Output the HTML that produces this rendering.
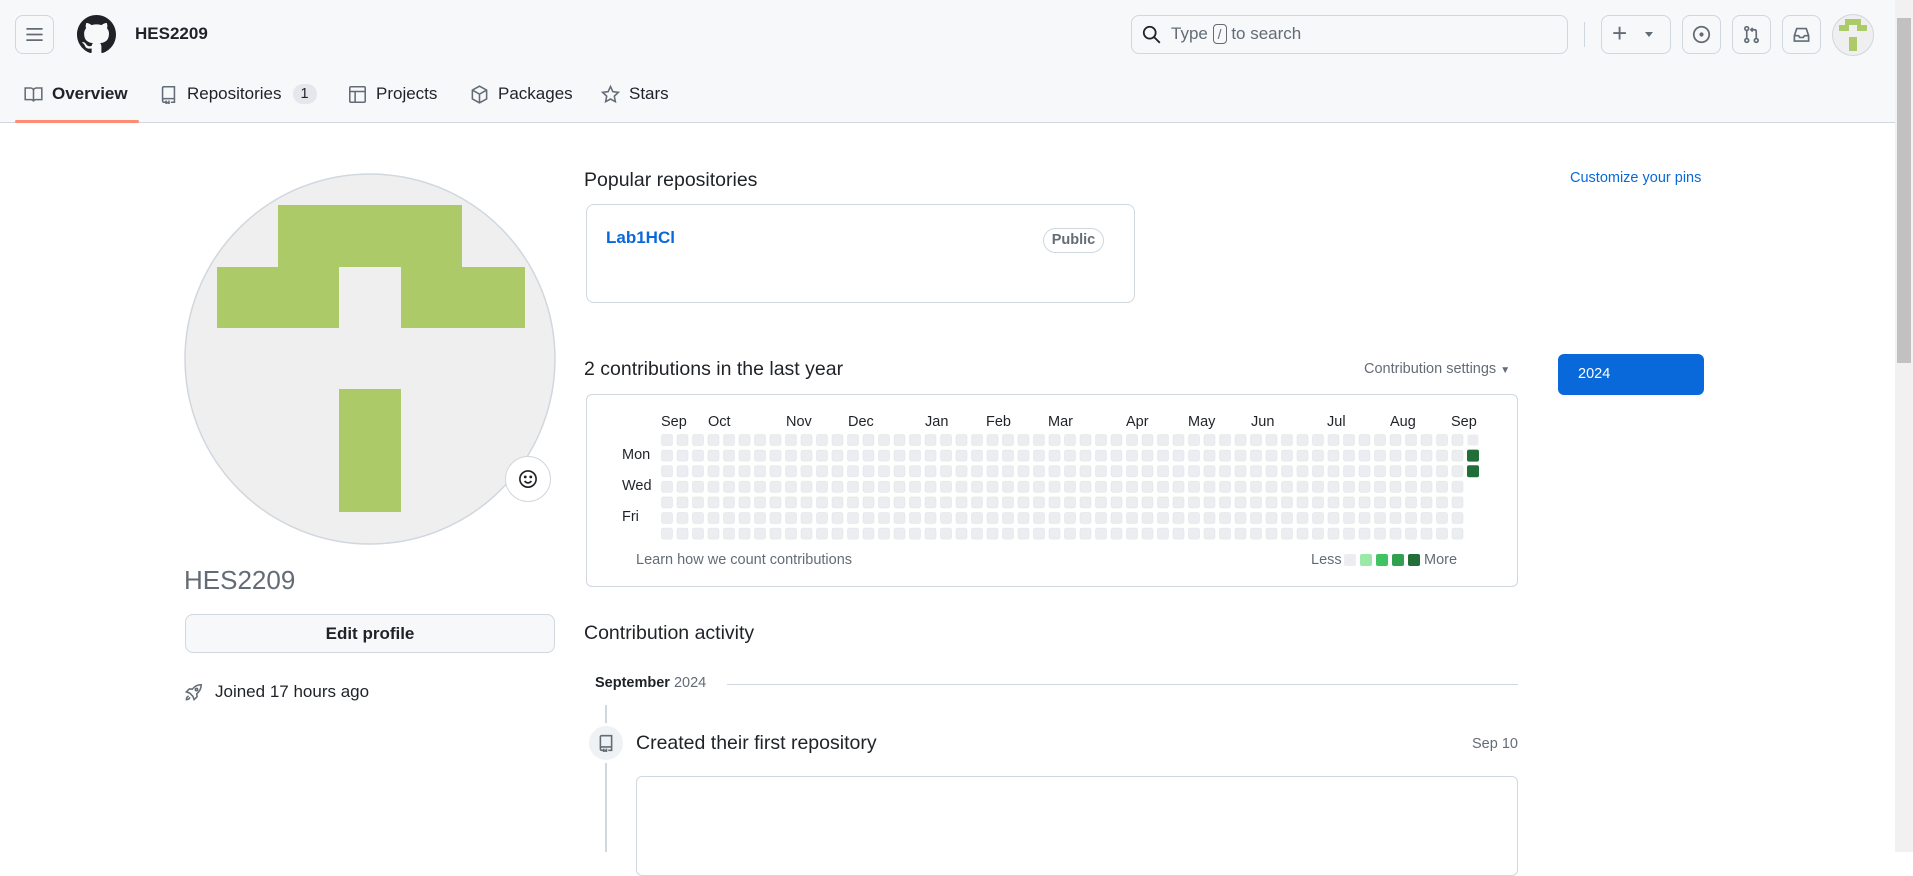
<!DOCTYPE html>
<html><head><meta charset="utf-8"><style>
*{box-sizing:border-box;margin:0;padding:0}
body{width:1913px;height:852px;overflow:hidden;background:#fff;font-family:"Liberation Sans",Arial,sans-serif;color:#1f2328;position:relative}
.a{position:absolute}
.hdr{left:0;top:0;width:1895px;height:123px;background:#f6f8fa;border-bottom:1px solid #d0d7de}
.btn{border:1px solid #d0d7de;border-radius:8px;background:#f6f8fa}
.tab{top:82px;font-size:17px;color:#1f2328;display:flex;align-items:center;gap:9px;height:24px}
.tab svg{width:19px;height:19px}
.sm{font-size:14.5px;color:#636c76}
</style></head><body>
<div class="a hdr"></div>
<div class="a btn" style="left:15px;top:15px;width:39px;height:39px"></div>
<svg class="a" style="left:25px;top:25px" width="19" height="19" viewBox="0 0 16 16" fill="#636c76"><rect x="1" y="2.5" width="14" height="1.5" rx=".75"/><rect x="1" y="7.25" width="14" height="1.5" rx=".75"/><rect x="1" y="12" width="14" height="1.5" rx=".75"/></svg>
<svg class="a" style="left:77px;top:15px" width="39" height="39" viewBox="0 0 16 16" fill="#1f2328"><path d="M8 0C3.58 0 0 3.58 0 8c0 3.540 2.29 6.53 5.47 7.59.4.07.55-.17.55-.38 0-.19-.01-.82-.01-1.49-2.010.37-2.530-.49-2.690-.94-.09-.23-.48-.94-.82-1.13-.28-.15-.68-.52-.01-.53.63-.01 1.08.58 1.23.82.72 1.21 1.87.87 2.33.66.07-.52.28-.87.51-1.07-1.78-.2-3.64-.89-3.64-3.95 0-.87.31-1.59.82-2.15-.08-.2-.36-1.02.08-2.12 0 0 .67-.21 2.2.82.64-.18 1.32-.27 2-.27.68 0 1.36.09 2 .27 1.53-1.04 2.2-.82 2.2-.82.44 1.1.16 1.92.08 2.12.51.56.82 1.27.82 2.15 0 3.07-1.87 3.75-3.65 3.95.29.25.54.73.54 1.48 0 1.07-.01 1.93-.01 2.2 0 .21.15.46.55.38A8.013 8.013 0 0016 8c0-4.42-3.58-8-8-8z"/></svg>
<div class="a" style="left:135px;top:24px;font-size:17px;font-weight:bold;line-height:20px">HES2209</div>

<div class="a btn" style="left:1131px;top:15px;width:437px;height:39px;background:#f6f8fa"></div>
<svg class="a" style="left:1142px;top:25px" width="19" height="19" viewBox="0 0 16 16" fill="none" stroke="#1f2328" stroke-width="1.5"><circle cx="6.5" cy="6.5" r="5"/><path d="M10.2 10.2L15 15"/></svg>
<div class="a sm" style="left:1171px;top:24px;font-size:17px;color:#636c76;line-height:20px">Type <span style="display:inline-block;border:1px solid #636c76;border-radius:4px;width:14px;height:20px;text-align:center;font-size:14px;line-height:18px">/</span> to search</div>
<div class="a" style="left:1584px;top:22px;width:1px;height:25px;background:#d0d7de"></div>
<div class="a btn" style="left:1601px;top:15px;width:70px;height:39px"></div>
<div class="a" style="left:1612px;top:17px;font-size:26px;color:#636c76;line-height:32px">+</div>
<div class="a" style="left:1645px;top:32px;width:0;height:0;border-left:4px solid transparent;border-right:4px solid transparent;border-top:5px solid #636c76"></div>
<div class="a btn" style="left:1682px;top:15px;width:39px;height:39px"></div>
<svg class="a" style="left:1692px;top:25px" width="19" height="19" viewBox="0 0 16 16" fill="none" stroke="#636c76" stroke-width="1.5"><circle cx="8" cy="8" r="6.5"/><circle cx="8" cy="8" r="1" fill="#636c76"/></svg>
<div class="a btn" style="left:1732px;top:15px;width:39px;height:39px"></div>
<svg class="a" style="left:1742px;top:25px" width="19" height="19" viewBox="0 0 16 16" fill="none" stroke="#636c76" stroke-width="1.4"><circle cx="4" cy="3" r="1.6"/><circle cx="4" cy="13" r="1.6"/><circle cx="12" cy="13" r="1.6"/><path d="M4 4.6v6.8M12 11.4V5.5c0-1-.6-1.5-1.5-1.5H7.5M9 2.5L7.5 4 9 5.5"/></svg>
<div class="a btn" style="left:1782px;top:15px;width:39px;height:39px"></div>
<svg class="a" style="left:1792px;top:25px" width="19" height="19" viewBox="0 0 16 16" fill="none" stroke="#636c76" stroke-width="1.4"><path d="M2 9l2-6h8l2 6v4.5H2z M2 9h3.5l1 1.5h3l1-1.5H14"/></svg>
<svg class="a" style="left:1832px;top:14px" width="42" height="42" viewBox="0 0 42 42"><circle cx="21" cy="21" r="20.5" fill="#efefef" stroke="#d0d7de"/><path d="M13 5h16v6h6v6H25v-6h-8v6H7v-6h6z M17 23h8v14h-8z" fill="#acca67"/></svg>

<div class="a tab" style="left:24px;font-weight:bold"><svg viewBox="0 0 16 16" fill="none" stroke="#636c76" stroke-width="1.3"><path d="M1 2.5h4.5c1.4 0 2.5 1 2.5 2.3V14c0-1-1-1.7-2-1.7H1zM15 2.5h-4.5C9.1 2.5 8 3.5 8 4.8V14c0-1 1-1.7 2-1.7h5z"/></svg>Overview</div>
<div class="a" style="left:15px;top:120px;width:124px;height:3px;background:#fd8c73;border-radius:2px"></div>
<div class="a tab" style="left:159px"><svg viewBox="0 0 16 16" fill="none" stroke="#636c76" stroke-width="1.3"><path d="M3 13V2.5C3 1.9 3.4 1.5 4 1.5h9v10H4.2C3.5 11.5 3 12 3 13s.5 1.5 1.2 1.5H6M10 14.5h3v-3M6 13v2.5l1.2-.8 1.2.8V13"/></svg>Repositories<span style="background:#e4e7eb;border-radius:12px;padding:2px 8px;font-size:14.5px;margin-left:2px">1</span></div>
<div class="a tab" style="left:348px"><svg viewBox="0 0 16 16" fill="none" stroke="#636c76" stroke-width="1.3"><rect x="1.5" y="1.5" width="13" height="13" rx="1"/><path d="M1.5 5.5h13M6 5.5v9"/></svg>Projects</div>
<div class="a tab" style="left:470px"><svg viewBox="0 0 16 16" fill="none" stroke="#636c76" stroke-width="1.3"><path d="M8 1l6 3.3v7.4L8 15l-6-3.3V4.3zM2 4.3L8 7.7l6-3.4M8 7.7V15"/></svg>Packages</div>
<div class="a tab" style="left:601px"><svg viewBox="0 0 16 16" fill="none" stroke="#636c76" stroke-width="1.3"><path d="M8 1.3l2 4.3 4.6.6-3.4 3.2.9 4.6L8 11.8 3.9 14l.9-4.6L1.4 6.2 6 5.6z"/></svg>Stars</div>
<div class="a" style="left:1895px;top:0;width:18px;height:852px;background:#f1f1f1"></div>
<div class="a" style="left:1897px;top:18px;width:14px;height:345px;background:#c1c1c1"></div>

<svg class="a" style="left:183px;top:172px" width="374" height="374" viewBox="0 0 374 374"><defs><clipPath id="c"><circle cx="187" cy="187" r="185"/></clipPath></defs><circle cx="187" cy="187" r="185" fill="#efefef"/><g clip-path="url(#c)" fill="#acca67"><rect x="95" y="33" width="184" height="62"/><rect x="34" y="95" width="122" height="61"/><rect x="218" y="95" width="124" height="61"/><rect x="156" y="217" width="62" height="123"/></g><circle cx="187" cy="187" r="185" fill="none" stroke="#d0d7de" stroke-width="1.5"/></svg>
<div class="a" style="left:505px;top:456px;width:46px;height:46px;border-radius:50%;background:#fff;border:1px solid #d0d7de"></div>
<svg class="a" style="left:518px;top:469px" width="20" height="20" viewBox="0 0 16 16" fill="none" stroke="#1f2328" stroke-width="1.3"><circle cx="8" cy="8" r="6.5"/><path d="M5.3 9.6c.7 1 1.6 1.5 2.7 1.5s2-.5 2.7-1.5"/><circle cx="5.8" cy="6.3" r=".5" fill="#1f2328"/><circle cx="10.2" cy="6.3" r=".5" fill="#1f2328"/></svg>
<div class="a" style="left:184px;top:565px;font-size:26px;color:#636c76;font-weight:300">HES2209</div>
<div class="a btn" style="left:185px;top:614px;width:370px;height:39px;font-size:17px;font-weight:bold;text-align:center;line-height:37px">Edit profile</div>
<svg class="a" style="left:184px;top:683px" width="19" height="19" viewBox="0 0 16 16" fill="none" stroke="#636c76" stroke-width="1.3"><path d="M14.5 1.5c-3 0-5.5 1.2-7.5 3.7L4.5 5 2 7.5l2.8 1 2.7 2.7 1 2.8 2.5-2.5-.2-2.5C13.3 7 14.5 4.5 14.5 1.5zM4 11c-1.5.5-2 2-2 3 1 0 2.5-.5 3-2"/><circle cx="10.5" cy="5.5" r="1"/></svg>
<div class="a" style="left:215px;top:682px;font-size:17px">Joined 17 hours ago</div>

<div class="a" style="left:584px;top:169px;font-size:19.5px">Popular repositories</div>
<div class="a" style="left:1570px;top:170px;font-size:14.5px;color:#0969da">Customize your pins</div>
<div class="a" style="left:586px;top:204px;width:549px;height:99px;border:1px solid #d0d7de;border-radius:8px"></div>
<div class="a" style="left:606px;top:228px;font-size:17px;font-weight:bold;color:#0969da">Lab1HCl</div>
<div class="a" style="left:1043px;top:228px;width:61px;height:25px;border:1px solid #d0d7de;border-radius:13px;font-size:14.5px;color:#636c76;text-align:center;line-height:23px;font-weight:bold">Public</div>

<div class="a" style="left:584px;top:358px;font-size:19.5px">2 contributions in the last year</div>
<div class="a sm" style="left:1364px;top:361px">Contribution settings <span style="font-size:10px">▼</span></div>
<div class="a" style="left:1558px;top:354px;width:146px;height:41px;background:#0969da;border-radius:6px;color:#fff;font-size:14.5px;line-height:41px;padding-left:20px">2024</div>
<div class="a" style="left:586px;top:394px;width:932px;height:193px;border:1px solid #d0d7de;border-radius:6px"></div>
<div class="a" style="left:0;top:414px;font-size:14.5px;color:#1f2328">
<span class="a" style="left:661px">Sep</span><span class="a" style="left:708px">Oct</span><span class="a" style="left:786px">Nov</span><span class="a" style="left:848px">Dec</span><span class="a" style="left:925px">Jan</span><span class="a" style="left:986px">Feb</span><span class="a" style="left:1048px">Mar</span><span class="a" style="left:1126px">Apr</span><span class="a" style="left:1188px">May</span><span class="a" style="left:1251px">Jun</span><span class="a" style="left:1327px">Jul</span><span class="a" style="left:1390px">Aug</span><span class="a" style="left:1451px">Sep</span></div>
<div class="a" style="left:622px;top:447px;font-size:14.5px">Mon</div>
<div class="a" style="left:622px;top:478px;font-size:14.5px">Wed</div>
<div class="a" style="left:622px;top:509px;font-size:14.5px">Fri</div>
<svg class="a" style="left:661px;top:434px" width="830" height="112"><defs><pattern id="p" width="15.5" height="15.6" patternUnits="userSpaceOnUse"><rect x=".5" y=".5" width="11" height="11" rx="2" fill="#ebedf0" stroke="#e1e4e8" stroke-width=".6"/></pattern></defs><rect x="0" y="0" width="806" height="109.2" fill="url(#p)"/><rect x="806.5" y=".5" width="11" height="11" rx="2" fill="#ebedf0"/><rect x="806" y="15.6" width="12" height="12" rx="2" fill="#216e39"/><rect x="806" y="31.2" width="12" height="12" rx="2" fill="#216e39"/></svg>
<div class="a sm" style="left:636px;top:552px">Learn how we count contributions</div>
<div class="a sm" style="left:1311px;top:552px">Less</div>
<svg class="a" style="left:1344px;top:554px" width="80" height="13"><rect width="12" height="12" rx="2" fill="#ebedf0"/><rect x="16" width="12" height="12" rx="2" fill="#9be9a8"/><rect x="32" width="12" height="12" rx="2" fill="#40c463"/><rect x="48" width="12" height="12" rx="2" fill="#30a14e"/><rect x="64" width="12" height="12" rx="2" fill="#216e39"/></svg>
<div class="a sm" style="left:1424px;top:552px">More</div>

<div class="a" style="left:584px;top:622px;font-size:19.5px">Contribution activity</div>
<div class="a" style="left:595px;top:675px;font-size:14.5px;font-weight:bold">September <span style="font-weight:normal;color:#636c76">2024</span></div>
<div class="a" style="left:727px;top:684px;width:791px;height:1px;background:#d0d7de"></div>
<div class="a" style="left:605px;top:705px;width:2px;height:147px;background:#d0d7de"></div>
<div class="a" style="left:586px;top:723px;width:40px;height:40px;border-radius:50%;background:#eff2f5;border:3px solid #fff"></div>
<svg class="a" style="left:597px;top:734px" width="18" height="18" viewBox="0 0 16 16" fill="none" stroke="#636c76" stroke-width="1.4"><path d="M3 13V2.5C3 1.9 3.4 1.5 4 1.5h9v10H4.2C3.5 11.5 3 12 3 13s.5 1.5 1.2 1.5H6M10 14.5h3v-3M6 13v2.5l1.2-.8 1.2.8V13"/></svg>
<div class="a" style="left:636px;top:732px;font-size:19.5px;color:#1f2328">Created their first repository</div>
<div class="a sm" style="left:1472px;top:736px">Sep 10</div>
<div class="a" style="left:636px;top:776px;width:882px;height:100px;border:1px solid #d0d7de;border-radius:6px"></div>
</body></html>
